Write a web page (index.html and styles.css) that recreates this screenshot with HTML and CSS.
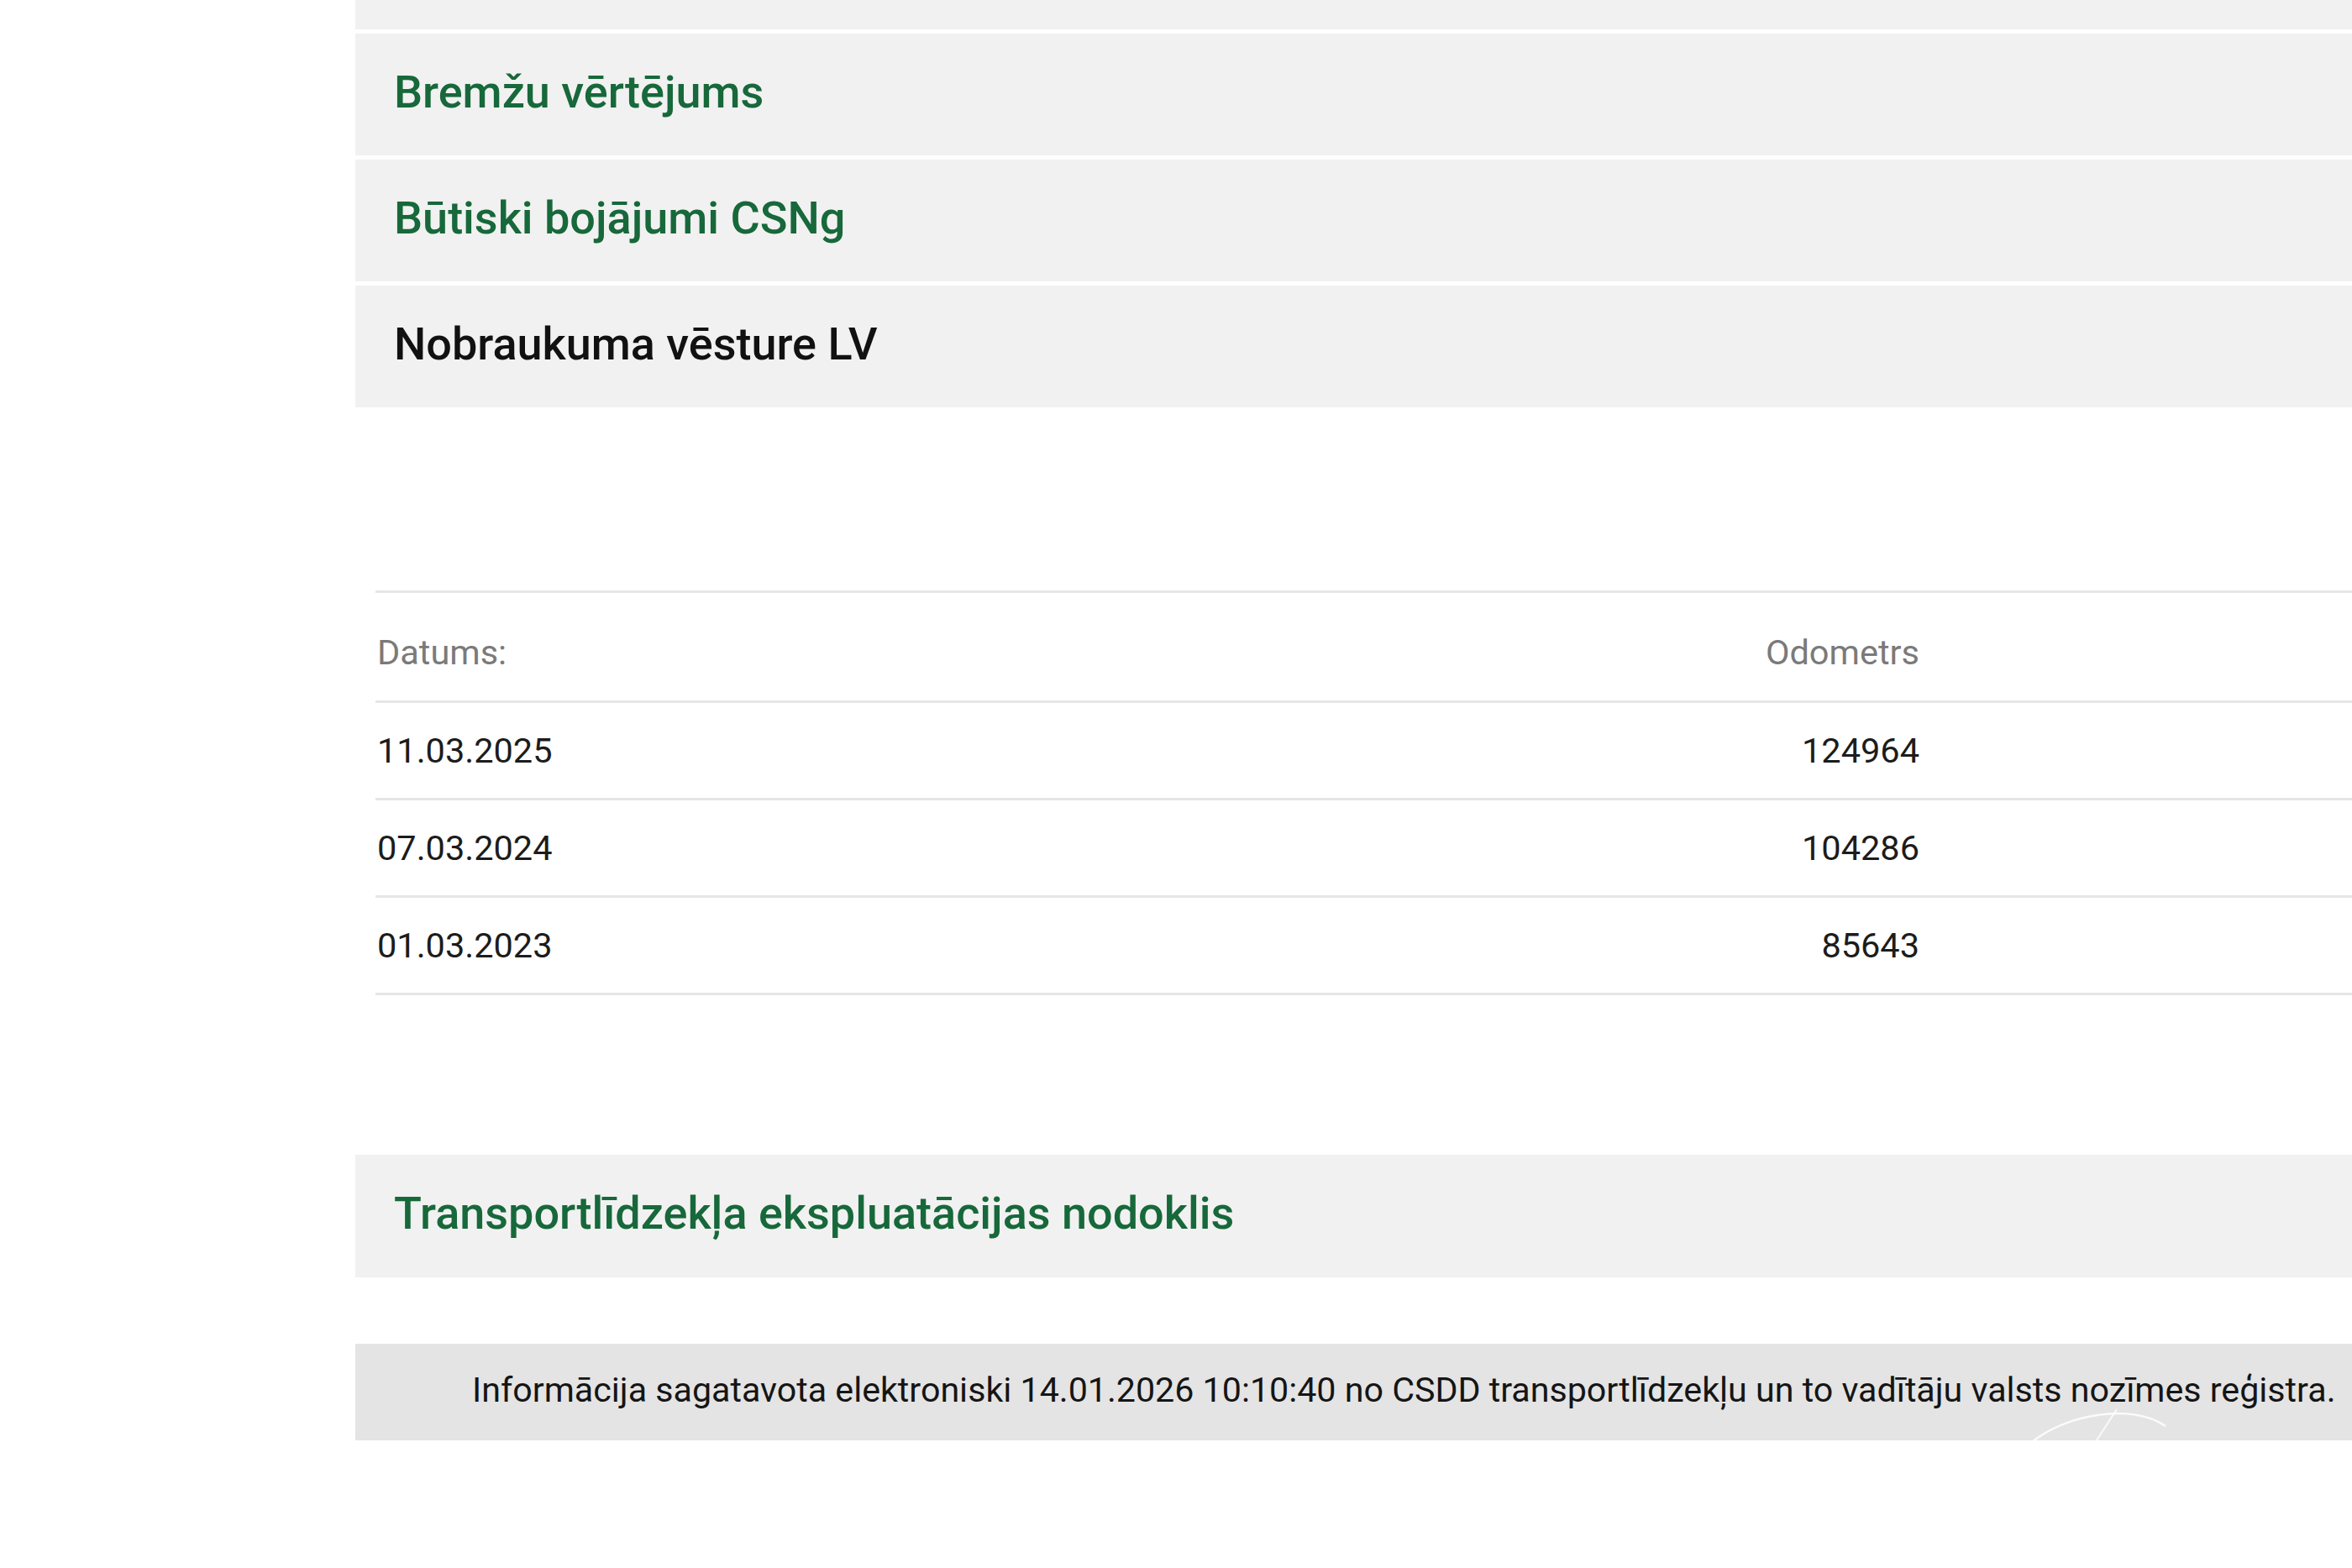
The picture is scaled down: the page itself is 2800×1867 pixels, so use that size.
FILE: index.html
```html
<!DOCTYPE html>
<html lang="lv">
<head>
<meta charset="utf-8">
<title>Nobraukuma vēsture</title>
<link rel="stylesheet" href="styles.css">
</head>
<body>
<div class="page">
  <main class="panel">
    <div class="bar bar-cut"></div>
    <div class="bar"><span class="bar-title link">Bremžu vērtējums</span></div>
    <div class="bar"><span class="bar-title link">Būtiski bojājumi CSNg</span></div>
    <div class="bar"><span class="bar-title">Nobraukuma vēsture LV</span></div>

    <div class="odo-table">
      <div class="odo-row odo-head">
        <div class="c-date">Datums:</div>
        <div class="c-odo">Odometrs</div>
      </div>
      <div class="odo-row">
        <div class="c-date">11.03.2025</div>
        <div class="c-odo">124964</div>
      </div>
      <div class="odo-row">
        <div class="c-date">07.03.2024</div>
        <div class="c-odo">104286</div>
      </div>
      <div class="odo-row">
        <div class="c-date">01.03.2023</div>
        <div class="c-odo">85643</div>
      </div>
    </div>

    <div class="bar bar-tax"><span class="bar-title link">Transportlīdzekļa ekspluatācijas nodoklis</span></div>

    <footer class="info">
      <p class="info-text">Informācija sagatavota elektroniski 14.01.2026 10:10:40 no CSDD transportlīdzekļu un to vadītāju valsts nozīmes reģistra.</p>
      <svg class="watermark" width="200" height="50" viewBox="0 0 200 50" aria-hidden="true">
        <path d="M10 46 C 50 12, 130 -2, 170 26" fill="none" stroke="#ffffff" stroke-width="2.5" stroke-opacity="0.85"/>
        <path d="M112 6 L 86 46" fill="none" stroke="#ffffff" stroke-width="2" stroke-opacity="0.8"/>
      </svg>
    </footer>
  </main>
</div>
</body>
</html>
```
FILE: styles.css
```css
html, body {
  margin: 0;
  padding: 0;
  background: #ffffff;
  overflow: hidden;
}

body {
  font-family: Roboto, "Noto Sans", "Liberation Sans", Arial, sans-serif;
  color: #1a1a1a;
}

.page {
  padding-left: 423px;
}

.panel {
  display: flex;
  flex-direction: column;
}

.bar {
  background: #f1f1f1;
  height: 145px;
  margin-top: 5px;
  display: flex;
  align-items: center;
  padding: 0 0 7px 46px;
  box-sizing: border-box;
}

.bar-cut {
  height: 35px;
  margin-top: 0;
  padding: 0;
}

.bar-title {
  font-size: 54px;
  font-weight: 500;
  color: #111111;
  white-space: nowrap;
}

.bar-title.link {
  color: #17683a;
}

.odo-table {
  margin: 218px 0 0 24px;
  border-top: 3px solid #e6e6e6;
}

.odo-row {
  display: grid;
  grid-template-columns: 1fr auto;
  align-items: center;
  height: 113px;
  border-bottom: 3px solid #e6e6e6;
  padding: 0 515px 0 2px;
  font-size: 41.5px;
  color: #1c1c1c;
}

.odo-head {
  height: 131px;
  color: #7a7a7a;
  padding-top: 12px;
  box-sizing: border-box;
}

.c-odo {
  text-align: right;
}

.bar-tax {
  margin-top: 190px;
  height: 146px;
}

.info {
  position: relative;
  margin-top: 79px;
  height: 115px;
  background: #e4e4e4;
  display: flex;
  align-items: center;
  padding: 0 0 6px 139px;
  box-sizing: border-box;
  overflow: hidden;
}

.info-text {
  margin: 0;
  font-size: 41.2px;
  color: #151515;
  white-space: nowrap;
}

.watermark {
  position: absolute;
  left: 1985px;
  top: 72px;
}
```
